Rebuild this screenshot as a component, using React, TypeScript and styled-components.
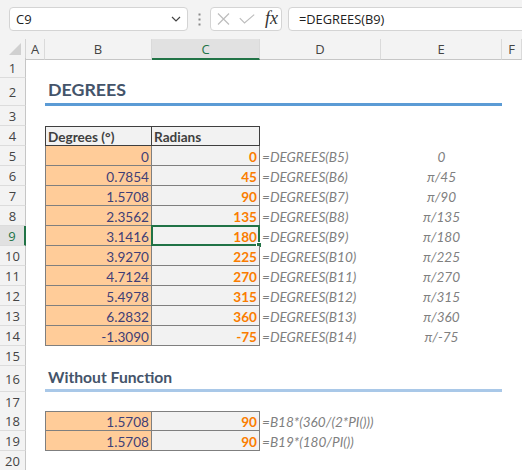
import React from "react";
import styled, { createGlobalStyle, css } from "styled-components";

const GlobalStyle = createGlobalStyle`
  html, body { margin: 0; padding: 0; background: #ffffff; }
  *, *::before, *::after { box-sizing: border-box; }
`;

const COLS = "26px 19px 107px 108px 121px 121px 20px";
const CELL_FONT = `Lato, "Carlito", "Liberation Sans", sans-serif`;
const UI_FONT = `"Segoe UI", "Open Sans", "Noto Sans", sans-serif`;
const GREEN = "#217346";

const Window = styled.div`
  width: 522px;
  height: 470px;
  overflow: hidden;
  background: #ffffff;
  display: flex;
  flex-direction: column;
`;

const Toolbar = styled.div`
  flex: none;
  height: 39px;
  background: #f3f3f3;
  display: flex;
  align-items: flex-start;
  padding: 7px 0 0 9px;
  font-family: ${UI_FONT};
`;

const Box = styled.div`
  height: 24px;
  background: #ffffff;
  border: 1px solid #d4d4d4;
  border-radius: 4px;
  display: flex;
  align-items: center;
`;

const NameBox = styled(Box)`
  width: 179px;
  justify-content: space-between;
  padding: 0 6px 0 6px;
  font-size: 13px;
  color: #222;
`;

const Grip = styled.div`
  width: 22px;
  height: 24px;
  display: flex;
  align-items: center;
  justify-content: center;
`;

const FxBox = styled(Box)`
  width: 72px;
  padding: 0 0 0 6px;
  gap: 9px;
`;

const FxLabel = styled.span`
  font-family: "Liberation Serif", "DejaVu Serif", serif;
  font-style: italic;
  font-size: 18px;
  color: #333;
  margin-left: 1px;
  line-height: 1;
  padding-bottom: 2px;
`;

const FormulaInput = styled(Box)`
  flex: 1;
  margin-left: 6px;
  margin-right: -8px;
  padding-left: 10px;
  font-size: 12.8px;
  color: #222;
`;

const Sheet = styled.div`
  flex: 1;
  display: flex;
  flex-direction: column;
`;

const SheetRow = styled.div<{ $h: number }>`
  display: grid;
  grid-template-columns: ${COLS};
  height: ${(p) => p.$h}px;
  flex: none;
`;

const Corner = styled.div`
  background: #f3f3f3;
  border-right: 1px solid #d4d4d4;
  border-bottom: 1px solid #c6c6c6;
  display: flex;
  align-items: flex-end;
  justify-content: flex-end;
  padding: 0 4px 4px 0;
`;

const ColHeader = styled.div<{ $active?: boolean }>`
  background: ${(p) => (p.$active ? "#e1e1e1" : "#f3f3f3")};
  border-right: 1px solid #dadada;
  border-bottom: ${(p) => (p.$active ? `2px solid ${GREEN}` : "1px solid #c6c6c6")};
  color: ${(p) => (p.$active ? GREEN : "#444")};
  font-family: ${UI_FONT};
  font-size: 13px;
  display: flex;
  align-items: center;
  justify-content: center;
  padding-top: ${(p) => (p.$active ? "1px" : "0")};
`;

const RowHeader = styled.div<{ $active?: boolean }>`
  background: ${(p) => (p.$active ? "#e1e1e1" : "#f3f3f3")};
  border-right: ${(p) => (p.$active ? `2px solid ${GREEN}` : "1px solid #c6c6c6")};
  border-bottom: 1px solid #dcdcdc;
  color: ${(p) => (p.$active ? GREEN : "#444")};
  font-family: ${UI_FONT};
  font-size: 13px;
  display: flex;
  align-items: center;
  justify-content: center;
  padding-top: 1px;
`;

const Blank = styled.div``;

type Kind = "input" | "calc" | "output" | "note";

const kindStyles: Record<Kind, ReturnType<typeof css>> = {
  input: css`
    background: #ffcc99;
    color: #3f3f76;
    border-right: 1px solid #7f7f7f;
    border-bottom: 1px solid #7f7f7f;
  `,
  calc: css`
    background: #f2f2f2;
    color: #fa7d00;
    font-weight: 700;
    border-right: 1px solid #7f7f7f;
    border-bottom: 1px solid #7f7f7f;
  `,
  output: css`
    background: #f2f2f2;
    color: #3f3f3f;
    font-weight: 700;
    border-right: 1px solid #3f3f3f;
    border-bottom: 1px solid #3f3f3f;
  `,
  note: css`
    color: #7f7f7f;
    font-style: italic;
  `,
};

const Cell = styled.div<{
  $kind: Kind;
  $align?: "left" | "right" | "center";
  $top?: boolean;
  $left?: boolean;
}>`
  position: relative;
  display: flex;
  align-items: center;
  padding: 2px 2px 0 2px;
  font-family: ${CELL_FONT};
  font-size: 13.6px;
  white-space: nowrap;
  justify-content: ${(p) =>
    p.$align === "right" ? "flex-end" : p.$align === "center" ? "center" : "flex-start"};
  ${(p) => kindStyles[p.$kind]}
  ${(p) =>
    p.$top &&
    css`
      border-top: 1px solid ${p.$kind === "output" ? "#3f3f3f" : "#7f7f7f"};
    `}
  ${(p) =>
    p.$left &&
    css`
      border-left: 1px solid ${p.$kind === "output" ? "#3f3f3f" : "#7f7f7f"};
    `}
`;

const Heading = styled.div<{ $level: 1 | 2 }>`
  grid-column: 3 / 7;
  display: flex;
  align-items: flex-end;
  padding: 0 0 3px 3px;
  font-family: ${CELL_FONT};
  font-weight: 700;
  color: #44546a;
  font-size: ${(p) => (p.$level === 1 ? "17.8px" : "15.7px")};
  border-bottom: 3px solid ${(p) => (p.$level === 1 ? "#5b9bd5" : "#a9c8e8")};
`;

const Selection = styled.div`
  position: absolute;
  left: -1px;
  top: -1px;
  right: -1px;
  bottom: -1px;
  border: 2px solid ${GREEN};
  pointer-events: none;
`;

const FillHandle = styled.div`
  position: absolute;
  right: -4px;
  bottom: -4px;
  width: 6px;
  height: 6px;
  background: ${GREEN};
  border: 1px solid #ffffff;
`;

const ChevronIcon = () => (
  <svg width="10" height="6" viewBox="0 0 10 6">
    <path d="M1 1 L5 5 L9 1" fill="none" stroke="#444" strokeWidth="1.2" />
  </svg>
);

const GripIcon = () => (
  <svg width="3" height="13" viewBox="0 0 3 13">
    <rect x="0.5" y="0.5" width="2" height="2" fill="#8a8a8a" />
    <rect x="0.5" y="5.5" width="2" height="2" fill="#8a8a8a" />
    <rect x="0.5" y="10.5" width="2" height="2" fill="#8a8a8a" />
  </svg>
);

const CancelIcon = () => (
  <svg width="13" height="12" viewBox="0 0 13 12">
    <path d="M1 0.5 L12 11.5 M12 0.5 L1 11.5" fill="none" stroke="#bdbdbd" strokeWidth="1.2" />
  </svg>
);

const EnterIcon = () => (
  <svg width="16" height="10" viewBox="0 0 16 10">
    <path d="M0.8 4.2 L5.5 9 L15.2 0.6" fill="none" stroke="#bdbdbd" strokeWidth="1.2" />
  </svg>
);

const CornerIcon = () => (
  <svg width="12" height="12" viewBox="0 0 12 12">
    <polygon points="12,0 12,12 0,12" fill="#d0d0d0" />
  </svg>
);

const rows: [string, string, string, string][] = [
  ["0", "0", "=DEGREES(B5)", "0"],
  ["0.7854", "45", "=DEGREES(B6)", "π/45"],
  ["1.5708", "90", "=DEGREES(B7)", "π/90"],
  ["2.3562", "135", "=DEGREES(B8)", "π/135"],
  ["3.1416", "180", "=DEGREES(B9)", "π/180"],
  ["3.9270", "225", "=DEGREES(B10)", "π/225"],
  ["4.7124", "270", "=DEGREES(B11)", "π/270"],
  ["5.4978", "315", "=DEGREES(B12)", "π/315"],
  ["6.2832", "360", "=DEGREES(B13)", "π/360"],
  ["-1.3090", "-75", "=DEGREES(B14)", "π/-75"],
];

const extra: [string, string, string][] = [
  ["1.5708", "90", "=B18*(360/(2*PI()))"],
  ["1.5708", "90", "=B19*(180/PI())"],
];

const EmptyRow = ({ n, h }: { n: number; h: number }) => (
  <SheetRow $h={h}>
    <RowHeader>{n}</RowHeader>
    <Blank />
    <Blank />
    <Blank />
    <Blank />
    <Blank />
    <Blank />
  </SheetRow>
);

export default function App() {
  return (
    <Window>
      <GlobalStyle />
      <Toolbar>
        <NameBox>
          <span>C9</span>
          <ChevronIcon />
        </NameBox>
        <Grip>
          <GripIcon />
        </Grip>
        <FxBox>
          <CancelIcon />
          <EnterIcon />
          <FxLabel>fx</FxLabel>
        </FxBox>
        <FormulaInput>=DEGREES(B9)</FormulaInput>
      </Toolbar>
      <Sheet>
        <SheetRow $h={19}>
          <Corner>
            <CornerIcon />
          </Corner>
          <ColHeader>A</ColHeader>
          <ColHeader>B</ColHeader>
          <ColHeader $active>C</ColHeader>
          <ColHeader>D</ColHeader>
          <ColHeader>E</ColHeader>
          <ColHeader>F</ColHeader>
        </SheetRow>
        <EmptyRow n={1} h={20} />
        <SheetRow $h={28}>
          <RowHeader>2</RowHeader>
          <Blank />
          <Heading $level={1}>DEGREES</Heading>
          <Blank />
        </SheetRow>
        <EmptyRow n={3} h={20} />
        <SheetRow $h={20}>
          <RowHeader>4</RowHeader>
          <Blank />
          <Cell $kind="output" $top $left>
            Degrees (°)
          </Cell>
          <Cell $kind="output" $top>
            Radians
          </Cell>
          <Blank />
          <Blank />
          <Blank />
        </SheetRow>
        {rows.map(([b, c, d, e], i) => {
          const n = i + 5;
          const active = n === 9;
          return (
            <SheetRow $h={20} key={n}>
              <RowHeader $active={active}>{n}</RowHeader>
              <Blank />
              <Cell $kind="input" $align="right" $left>
                {b}
              </Cell>
              <Cell $kind="calc" $align="right">
                {c}
                {active && (
                  <Selection>
                    <FillHandle />
                  </Selection>
                )}
              </Cell>
              <Cell $kind="note">{d}</Cell>
              <Cell $kind="note" $align="center">
                {e}
              </Cell>
              <Blank />
            </SheetRow>
          );
        })}
        <EmptyRow n={15} h={20} />
        <SheetRow $h={26}>
          <RowHeader>16</RowHeader>
          <Blank />
          <Heading $level={2}>Without Function</Heading>
          <Blank />
        </SheetRow>
        <EmptyRow n={17} h={19} />
        {extra.map(([b, c, d], i) => (
          <SheetRow $h={20} key={i}>
            <RowHeader>{18 + i}</RowHeader>
            <Blank />
            <Cell $kind="input" $align="right" $left $top={i === 0}>
              {b}
            </Cell>
            <Cell $kind="calc" $align="right" $top={i === 0}>
              {c}
            </Cell>
            <Cell $kind="note">{d}</Cell>
            <Blank />
            <Blank />
          </SheetRow>
        ))}
        <EmptyRow n={20} h={20} />
      </Sheet>
    </Window>
  );
}
